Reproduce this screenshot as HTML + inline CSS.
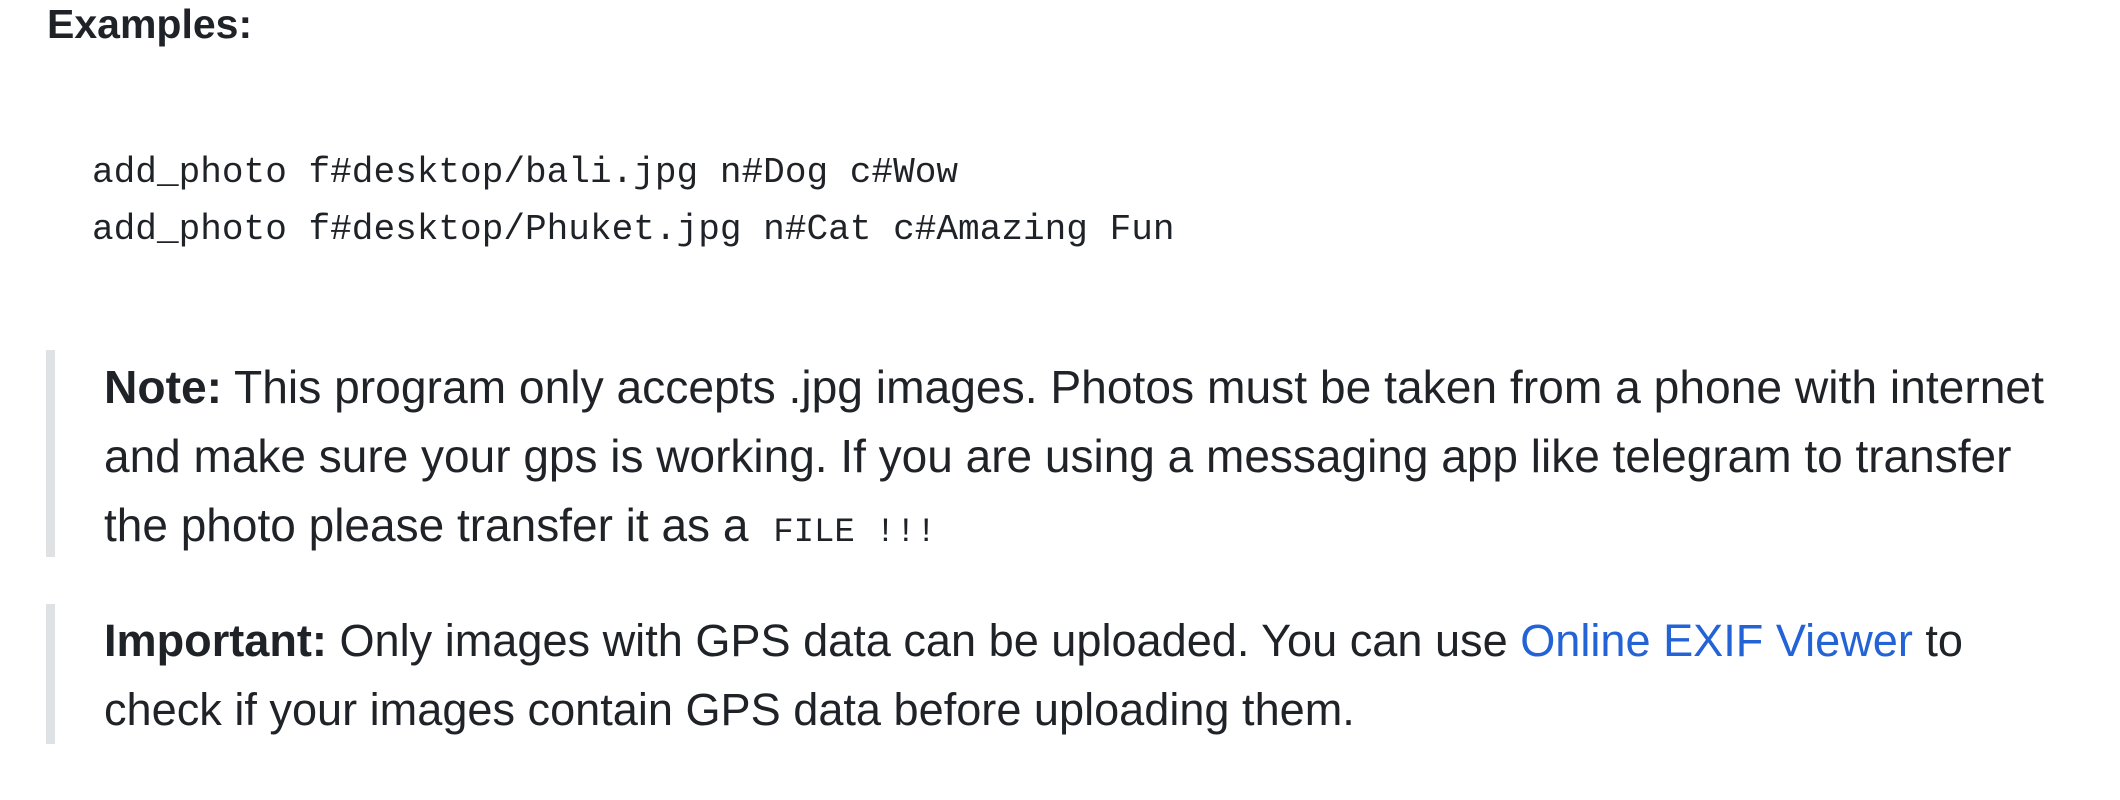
<!DOCTYPE html>
<html><head><meta charset="utf-8"><style>
html,body{margin:0;padding:0;background:#fff;width:2120px;height:800px;overflow:hidden}
body{position:relative;font-family:"Liberation Sans",sans-serif;color:#1f2328}
.l{position:absolute;white-space:nowrap;line-height:60px;height:60px}
.t{font-size:45.5px}
.m{font-family:"Liberation Mono",monospace;font-size:36.1px}
.bar{position:absolute;left:46px;width:9px;background:#dfe2e5}
a{color:#2463d6;text-decoration:none}
code{font-family:"Liberation Mono",monospace;font-size:34px;padding:0 12px}
</style></head><body>
<div class="l" style="left:47px;top:-6px;font-size:41px;font-weight:bold">Examples:</div>
<div class="l m" style="left:92px;top:143px">add_photo f#desktop/bali.jpg n#Dog c#Wow</div>
<div class="l m" style="left:92px;top:200px">add_photo f#desktop/Phuket.jpg n#Cat c#Amazing Fun</div>
<div class="bar" style="top:350px;height:207px"></div>
<div class="l t" style="left:104px;top:357px;font-size:46.2px"><b>Note:</b> This program only accepts .jpg images. Photos must be taken from a phone with internet</div>
<div class="l t" style="left:104px;top:426px;font-size:46px">and make sure your gps is working. If you are using a messaging app like telegram to transfer</div>
<div class="l t" style="left:104px;top:495px;font-size:46px">the photo please transfer it as a <code>FILE !!!</code></div>
<div class="bar" style="top:604px;height:140px"></div>
<div class="l t" style="left:104px;top:611px;font-size:45.1px"><b>Important:</b> Only images with GPS data can be uploaded. You can use <a>Online EXIF Viewer</a> to</div>
<div class="l t" style="left:104px;top:680px;font-size:45.1px">check if your images contain GPS data before uploading them.</div>
</body></html>
